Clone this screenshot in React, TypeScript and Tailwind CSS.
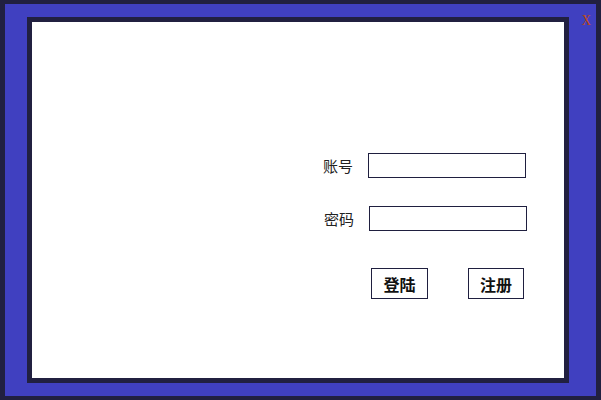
import React from "react";

const cjk = '"Noto Sans CJK SC", "Noto Sans", sans-serif';

function Field({ label, shift }: { label: string; shift: string }) {
  return (
    <div className={`flex items-center ${shift}`}>
      <span className="text-[15px] leading-none text-[#222]" style={{ fontFamily: cjk }}>
        {label}
      </span>
      <input className="ml-[15px] w-[158px] h-[25px] border border-[#1f1f3f] bg-white outline-none" />
    </div>
  );
}

export default function App() {
  return (
    <div className="relative w-[601px] h-[400px] bg-[#4040c0] border-y-4 border-x-[5px] border-[#212040]">
      <span
        className="absolute right-[4px] top-[9px] text-[15px] leading-none text-[#c04a10] scale-x-[0.85]"
        style={{ fontFamily: '"Liberation Serif", serif' }}
      >
        X
      </span>
      <div className="ml-[22px] mt-[13px] w-[542px] h-[366px] border-[5px] border-[#212040] bg-white">
        <div className="flex flex-col items-end pt-[131px]" style={{ fontFamily: cjk }}>
          <Field label="账号" shift="mr-[38px]" />
          <div className="mt-[28px]">
            <Field label="密码" shift="mr-[37px]" />
          </div>
          <div className="mt-[37px] mr-[40px] flex gap-[40px]">
            <button className="w-[57px] h-[31px] border border-[#1f1f3f] text-[16px] font-bold text-[#111]">
              登陆
            </button>
            <button className="w-[56px] h-[31px] border border-[#1f1f3f] text-[16px] font-bold text-[#111]">
              注册
            </button>
          </div>
        </div>
      </div>
    </div>
  );
}
